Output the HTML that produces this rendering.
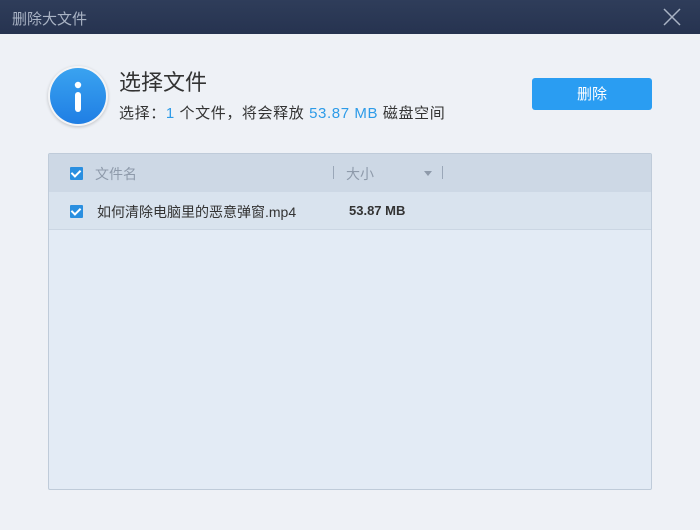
<!DOCTYPE html>
<html><head><meta charset="utf-8"><style>
*{margin:0;padding:0;box-sizing:border-box}
body{width:700px;height:530px;background:#eef1f6;font-family:"Liberation Sans","Noto Sans CJK SC",sans-serif;position:relative;overflow:hidden}
.tb{position:absolute;left:0;top:0;width:700px;height:34px;background:linear-gradient(#2f3d5a,#263350);}
.tb span{position:absolute;left:12px;top:8px;color:#a9b3c4;font-size:15px}
.x{position:absolute;left:662px;top:7px}
.ic{position:absolute;left:48px;top:66px;width:60px;height:60px;border-radius:50%;background:#f3f4f6;box-shadow:0 1px 3px rgba(0,0,0,.2)}
.ic div{position:absolute;left:2px;top:2px;width:56px;height:56px;border-radius:50%;background:linear-gradient(#3aa3f0,#1f7ee4)}
.t1{position:absolute;left:119px;top:65px;font-size:22px;color:#333}
.t2{position:absolute;left:119px;top:102px;font-size:15px;color:#333;letter-spacing:0.6px}
.b{color:#2d9be8}
.btn{position:absolute;left:532px;top:78px;width:120px;height:32px;background:#2a9df2;border-radius:3px;color:#fff;font-size:15px;text-align:center;line-height:34px}
.pn{position:absolute;left:48px;top:153px;width:604px;height:337px;background:#e3ebf5;border:1px solid #bfcbd9;border-radius:2px}
.hd{position:absolute;left:0;top:0;width:602px;height:38px;background:#cdd8e5}
.rw{position:absolute;left:0;top:38px;width:602px;height:38px;background:#d9e3ee;border-bottom:1px solid #cbd6e3}
.cb{position:absolute;width:13px;height:13px;background:#2a8fe0;border-radius:1px}
.cb:after{content:"";position:absolute;left:3px;top:1px;width:4px;height:7px;border:solid #fff;border-width:0 2px 2px 0;transform:rotate(45deg)}
.s{position:absolute;font-size:14px}
.sep{position:absolute;top:12px;width:1px;height:13px;background:#9aa7b8}
</style></head><body>
<div class="tb"><span>删除大文件</span>
<svg class="x" width="20" height="20"><path d="M2 2L18 18M18 2L2 18" stroke="#a9b3c4" stroke-width="1.5"/></svg></div>
<div class="ic"><div><svg width="56" height="56"><circle cx="28" cy="17" r="3.2" fill="#fff"/><rect x="25" y="24" width="6" height="20" rx="3" fill="#fff"/></svg></div></div>
<div class="t1">选择文件</div>
<div class="t2">选择：<span class="b">1</span> 个文件，将会释放 <span class="b">53.87 MB</span> 磁盘空间</div>
<div class="btn">删除</div>
<div class="pn">
<div class="hd"><div class="cb" style="left:21px;top:13px"></div><div class="s" style="left:46px;top:10px;color:#8e9aaa">文件名</div>
<div class="sep" style="left:284px"></div><div class="s" style="left:297px;top:10px;color:#8e9aaa">大小</div>
<div style="position:absolute;left:375px;top:17px;border:4px solid transparent;border-top:5px solid #8e9aaa;border-bottom:0"></div>
<div class="sep" style="left:393px"></div></div>
<div class="rw"><div class="cb" style="left:21px;top:13px"></div><div class="s" style="left:48px;top:10px;color:#333">如何清除电脑里的恶意弹窗.mp4</div>
<div class="s" style="left:300px;top:11px;color:#333;font-weight:bold;font-size:13px">53.87 MB</div></div>
</div>
</body></html>
